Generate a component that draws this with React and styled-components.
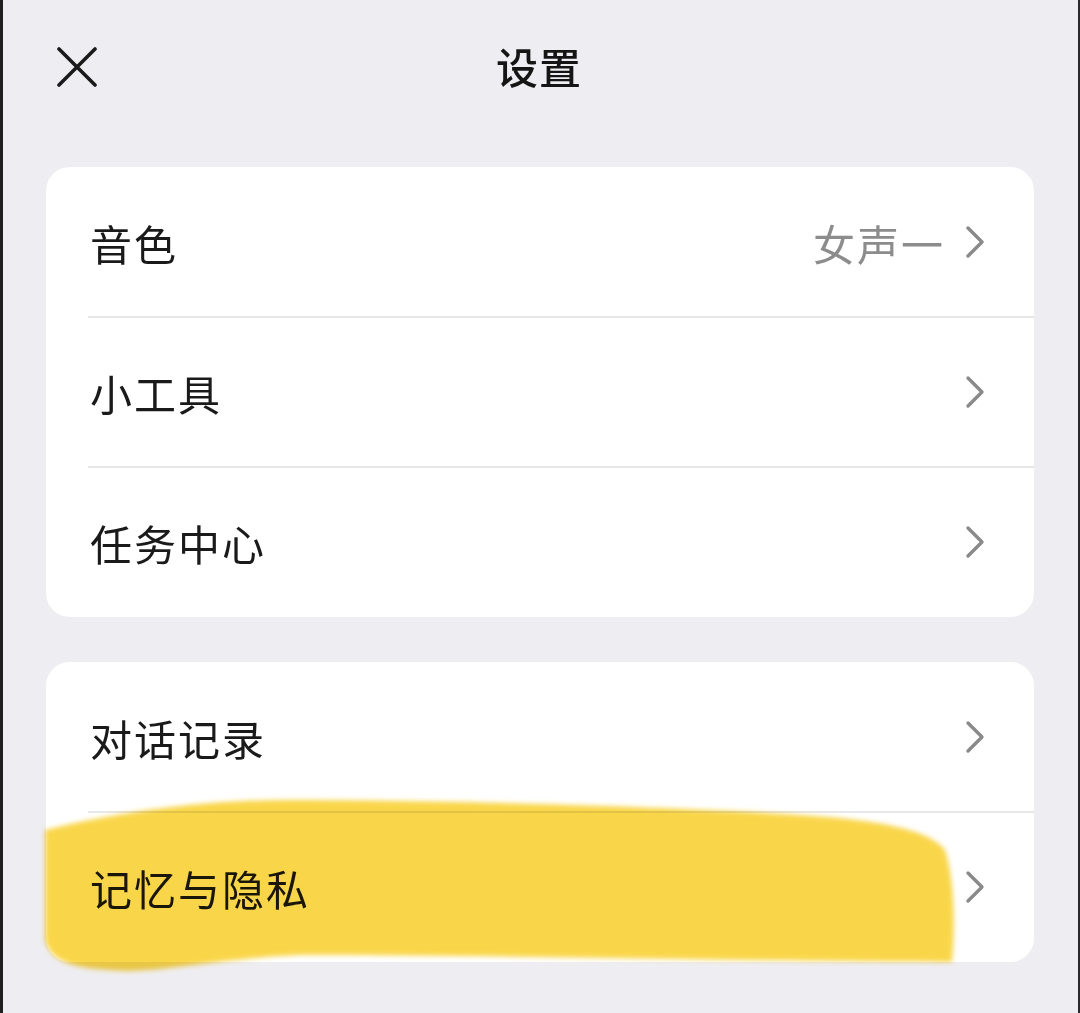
import React from 'react'
import styled, { createGlobalStyle } from 'styled-components'

const GlobalStyle = createGlobalStyle`
  html, body {
    margin: 0;
    padding: 0;
    background: #eeedf2;
  }
`

const Page = styled.div`
  position: relative;
  box-sizing: border-box;
  width: 1080px;
  height: 1013px;
  background: #eeedf2;
  border-left: 3px solid #1f1f22;
  border-right: 2px solid #2a2a2e;
  font-family: "Noto Sans CJK SC", "Noto Sans", sans-serif;
  overflow: hidden;
`

const Header = styled.div`
  position: relative;
  height: 136px;
  display: flex;
  align-items: center;
  justify-content: center;
`

const CloseButton = styled.div`
  position: absolute;
  left: 54px;
  top: 47px;
  width: 40px;
  height: 40px;
`

const Title = styled.h1`
  margin: -6px 0 0 -3px;
  font-size: 42px;
  font-weight: 500;
  color: #151515;
  letter-spacing: 1px;
`

const Content = styled.div`
  display: flex;
  flex-direction: column;
  gap: 45px;
  padding: 31px 44px 0 43px;
`

const Card = styled.div`
  background: #ffffff;
  border-radius: 24px;
  overflow: hidden;
`

const Row = styled.div`
  position: relative;
  height: 150px;
  display: flex;
  align-items: center;
  justify-content: space-between;
  padding: 0 47px 0 44px;
  &::after {
    content: '';
    display: ${p => (p.last ? 'none' : 'block')};
    position: absolute;
    left: 42px;
    right: 0;
    bottom: -1px;
    height: 2px;
    background: #e8e8ea;
  }
`

const Label = styled.span`
  font-size: 42px;
  color: #1a1a1a;
  letter-spacing: 2px;
`

const Trail = styled.div`
  display: flex;
  align-items: center;
  gap: 18px;
`

const Value = styled.span`
  font-size: 42px;
  color: #8c8c8c;
  letter-spacing: 2px;
`

const Highlight = styled.svg`
  position: absolute;
  left: 27px;
  top: 790px;
  mix-blend-mode: multiply;
  pointer-events: none;
`

const Chevron = () => (
  <svg width="24" height="36" viewBox="0 0 24 36">
    <path d="M5 4 L19 18 L5 32" fill="none" stroke="#8a8a8a" strokeWidth="3.4" strokeLinecap="round" strokeLinejoin="round" />
  </svg>
)

const groups = [
  [
    { label: '音色', value: '女声一' },
    { label: '小工具' },
    { label: '任务中心' },
  ],
  [
    { label: '对话记录' },
    { label: '记忆与隐私' },
  ],
]

export default function App() {
  return (
    <>
      <GlobalStyle />
      <Page>
        <Header>
          <CloseButton>
            <svg width="40" height="40" viewBox="0 0 40 40">
              <path d="M2 2 L38 38 M38 2 L2 38" stroke="#1a1a1a" strokeWidth="3.6" strokeLinecap="round" />
            </svg>
          </CloseButton>
          <Title>设置</Title>
        </Header>
        <Content>
          {groups.map((rows, gi) => (
            <Card key={gi}>
              {rows.map((r, i) => (
                <Row key={r.label} last={i === rows.length - 1}>
                  <Label>{r.label}</Label>
                  <Trail>
                    {r.value && <Value>{r.value}</Value>}
                    <Chevron />
                  </Trail>
                </Row>
              ))}
            </Card>
          ))}
        </Content>
        <Highlight width="940" height="195" viewBox="30 790 940 195">
          <defs>
            <filter id="soft" x="-5%" y="-10%" width="110%" height="120%">
              <feGaussianBlur stdDeviation="2.5" />
            </filter>
          </defs>
          <path
            filter="url(#soft)"
            fill="#f9d64a"
            d="M45 830 C120 812 200 800 290 800 C450 800 700 808 800 815 C880 820 930 830 945 850 C955 880 955 930 952 962 C800 962 500 955 300 955 C220 958 150 975 110 970 C70 968 50 960 45 940 Z"
          />
        </Highlight>
      </Page>
    </>
  )
}
